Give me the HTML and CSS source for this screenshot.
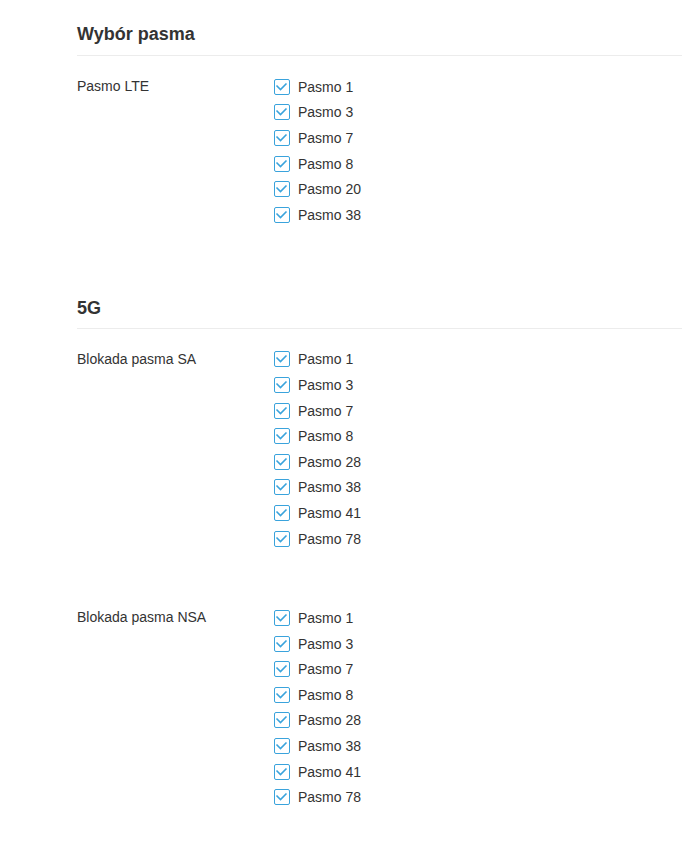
FILE: index.html
```html
<!DOCTYPE html>
<html lang="pl">
<head>
  <meta charset="UTF-8">
  <title>Wybór pasma</title>
  <link rel="stylesheet" href="styles.css">
</head>
<body>

  <!-- LTE -->
  <div class="section">
    <h2 class="section-title">Wybór pasma</h2>
    <div class="field">
      <div class="field-label">Pasmo LTE</div>
      <ul class="band-list">
        <li><span class="check"><svg viewBox="0 0 13 13"><path d="M1.5 5.5 L5.5 9.5 L11.5 3.5"/></svg></span>Pasmo 1</li>
        <li><span class="check"><svg viewBox="0 0 13 13"><path d="M1.5 5.5 L5.5 9.5 L11.5 3.5"/></svg></span>Pasmo 3</li>
        <li><span class="check"><svg viewBox="0 0 13 13"><path d="M1.5 5.5 L5.5 9.5 L11.5 3.5"/></svg></span>Pasmo 7</li>
        <li><span class="check"><svg viewBox="0 0 13 13"><path d="M1.5 5.5 L5.5 9.5 L11.5 3.5"/></svg></span>Pasmo 8</li>
        <li><span class="check"><svg viewBox="0 0 13 13"><path d="M1.5 5.5 L5.5 9.5 L11.5 3.5"/></svg></span>Pasmo 20</li>
        <li><span class="check"><svg viewBox="0 0 13 13"><path d="M1.5 5.5 L5.5 9.5 L11.5 3.5"/></svg></span>Pasmo 38</li>
      </ul>
    </div>
  </div>

  <!-- 5G -->
  <div class="section">
    <h2 class="section-title">5G</h2>
    <div class="field">
      <div class="field-label">Blokada pasma SA</div>
      <ul class="band-list">
        <li><span class="check"><svg viewBox="0 0 13 13"><path d="M1.5 5.5 L5.5 9.5 L11.5 3.5"/></svg></span>Pasmo 1</li>
        <li><span class="check"><svg viewBox="0 0 13 13"><path d="M1.5 5.5 L5.5 9.5 L11.5 3.5"/></svg></span>Pasmo 3</li>
        <li><span class="check"><svg viewBox="0 0 13 13"><path d="M1.5 5.5 L5.5 9.5 L11.5 3.5"/></svg></span>Pasmo 7</li>
        <li><span class="check"><svg viewBox="0 0 13 13"><path d="M1.5 5.5 L5.5 9.5 L11.5 3.5"/></svg></span>Pasmo 8</li>
        <li><span class="check"><svg viewBox="0 0 13 13"><path d="M1.5 5.5 L5.5 9.5 L11.5 3.5"/></svg></span>Pasmo 28</li>
        <li><span class="check"><svg viewBox="0 0 13 13"><path d="M1.5 5.5 L5.5 9.5 L11.5 3.5"/></svg></span>Pasmo 38</li>
        <li><span class="check"><svg viewBox="0 0 13 13"><path d="M1.5 5.5 L5.5 9.5 L11.5 3.5"/></svg></span>Pasmo 41</li>
        <li><span class="check"><svg viewBox="0 0 13 13"><path d="M1.5 5.5 L5.5 9.5 L11.5 3.5"/></svg></span>Pasmo 78</li>
      </ul>
    </div>
    <div class="field">
      <div class="field-label">Blokada pasma NSA</div>
      <ul class="band-list">
        <li><span class="check"><svg viewBox="0 0 13 13"><path d="M1.5 5.5 L5.5 9.5 L11.5 3.5"/></svg></span>Pasmo 1</li>
        <li><span class="check"><svg viewBox="0 0 13 13"><path d="M1.5 5.5 L5.5 9.5 L11.5 3.5"/></svg></span>Pasmo 3</li>
        <li><span class="check"><svg viewBox="0 0 13 13"><path d="M1.5 5.5 L5.5 9.5 L11.5 3.5"/></svg></span>Pasmo 7</li>
        <li><span class="check"><svg viewBox="0 0 13 13"><path d="M1.5 5.5 L5.5 9.5 L11.5 3.5"/></svg></span>Pasmo 8</li>
        <li><span class="check"><svg viewBox="0 0 13 13"><path d="M1.5 5.5 L5.5 9.5 L11.5 3.5"/></svg></span>Pasmo 28</li>
        <li><span class="check"><svg viewBox="0 0 13 13"><path d="M1.5 5.5 L5.5 9.5 L11.5 3.5"/></svg></span>Pasmo 38</li>
        <li><span class="check"><svg viewBox="0 0 13 13"><path d="M1.5 5.5 L5.5 9.5 L11.5 3.5"/></svg></span>Pasmo 41</li>
        <li><span class="check"><svg viewBox="0 0 13 13"><path d="M1.5 5.5 L5.5 9.5 L11.5 3.5"/></svg></span>Pasmo 78</li>
      </ul>
    </div>
  </div>

</body>
</html>
```

FILE: styles.css
```css
body {
  font-family: 'Liberation Sans', Arial, sans-serif;
  margin: 0;
  padding: 0 0 0 77px;
  color: #333;
  background: #fff;
}

.section {
  padding-top: 23px;
  margin-bottom: 46px;
}

.section-title {
  font-size: 18px;
  line-height: 22px;
  font-weight: bold;
  margin: 0;
  padding-bottom: 10px;
  border-bottom: 1px solid #ececec;
}

.section + .section .section-title {
  padding-bottom: 9px;
}

.field {
  display: flex;
  margin-top: 18px;
}

.field + .field {
  margin-top: 54px;
}

.field-label {
  width: 197px;
  font-size: 14px;
  line-height: 25.6px;
}

.band-list {
  list-style: none;
  margin: 0;
  padding: 0;
}

.band-list li {
  display: flex;
  align-items: center;
  height: 25.6px;
  font-size: 14px;
}

.check {
  width: 16px;
  height: 16px;
  box-sizing: border-box;
  border: 1.5px solid #3aa3dc;
  border-radius: 2px;
  margin-right: 8px;
  display: flex;
}

.check svg {
  width: 13px;
  height: 13px;
  fill: none;
  stroke: #3aa3dc;
  stroke-width: 1.6;
}
```
